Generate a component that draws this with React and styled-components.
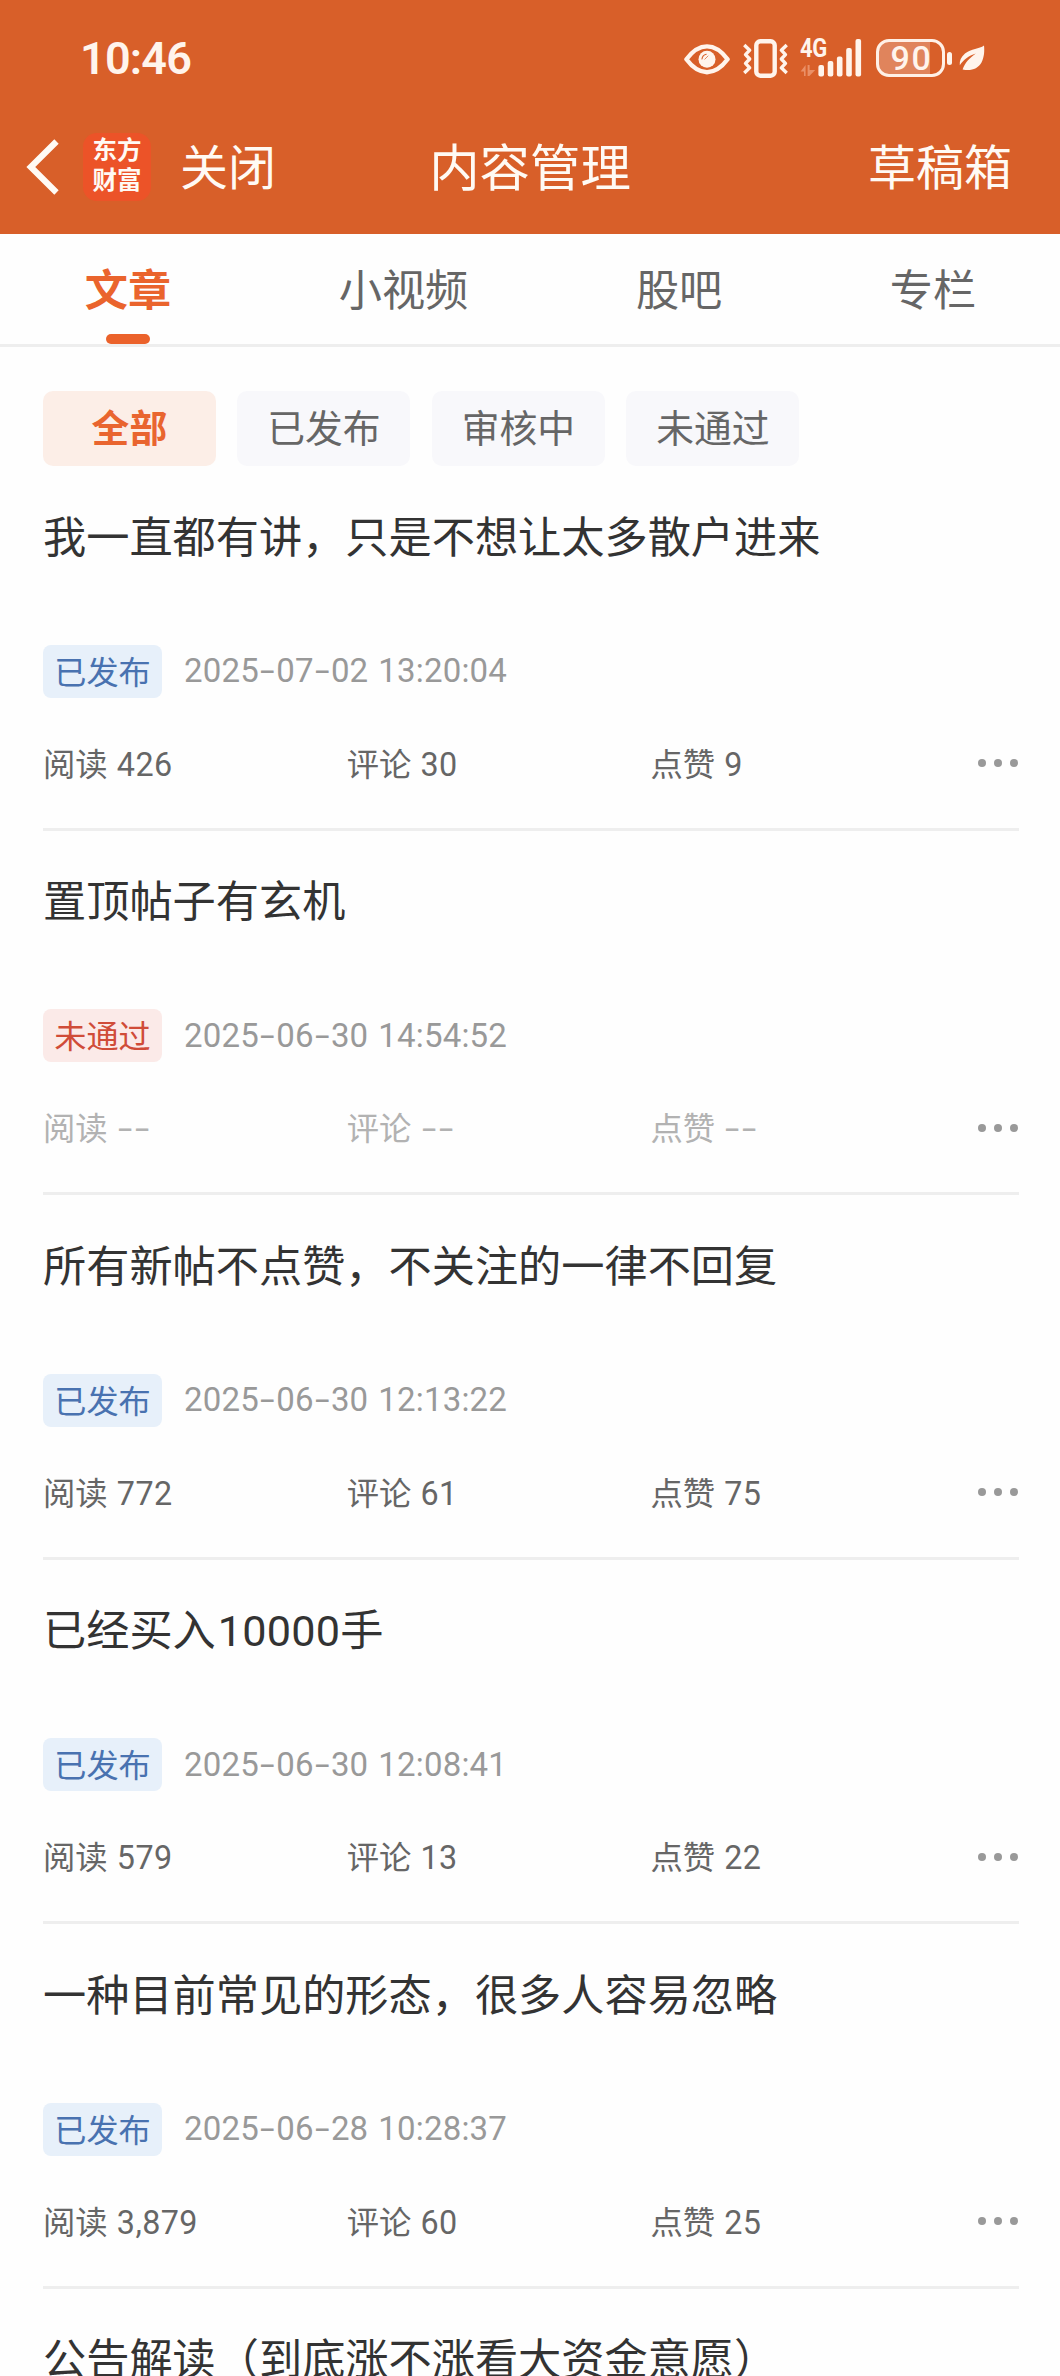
import React from "react";
import styled, { createGlobalStyle } from "styled-components";

const GlobalStyle = createGlobalStyle`
  * { box-sizing: border-box; }
  html, body { margin: 0; padding: 0; background: #fefefe; }
  body {
    font-family: Roboto, "Noto Sans CJK SC", sans-serif;
    -webkit-font-smoothing: antialiased;
  }
`;

const Screen = styled.div`
  width: 1060px;
  height: 2376px;
  overflow: hidden;
  background: #fefefe;
`;

const Header = styled.header`
  height: 234px;
  background: #d85f29;
  color: #fffaf4;
`;

const StatusBar = styled.div`
  display: flex;
  align-items: center;
  justify-content: space-between;
  height: 116px;
  padding: 0 75px 0 80px;
  color: #fff4ec;
`;

const Clock = styled.span`
  padding-top: 2px;
  font-size: 45px;
  font-weight: 600;
  line-height: 52px;
  letter-spacing: -0.8px;
`;

const StatusIcons = styled.div`
  display: flex;
  align-items: center;
`;

const Glyph = styled.svg`
  display: block;
  flex: none;
  margin-left: ${(p) => p.$gap || 0}px;
`;

const Signal = styled.div`
  position: relative;
  width: 62px;
  height: 40px;
  margin-left: 11px;
`;

const NetworkType = styled.span`
  position: absolute;
  left: 0;
  top: -1px;
  font-size: 25px;
  font-weight: 700;
  line-height: 24px;
  letter-spacing: -0.5px;
  transform: scaleX(0.88);
  transform-origin: left center;
`;

const Battery = styled.div`
  display: flex;
  align-items: center;
  margin-left: 14px;
`;

const BatteryBody = styled.div`
  display: flex;
  align-items: center;
  justify-content: center;
  width: 69px;
  height: 38px;
  padding-left: 2px;
  border: 3.5px solid #fff0e6;
  border-radius: 13px;
  background: linear-gradient(to right, #e0845c 51px, transparent 51px);
  font-size: 34px;
  font-weight: 500;
  line-height: 34px;
  letter-spacing: 1.6px;
`;

const BatteryCap = styled.div`
  width: 5px;
  height: 13px;
  margin-left: 2px;
  border-radius: 2.5px;
  background: #fff4ec;
`;

const NavBar = styled.div`
  display: grid;
  grid-template-columns: 1fr auto 1fr;
  align-items: center;
  height: 101px;
  padding: 0 48px 0 26px;
`;

const NavLeft = styled.div`
  display: flex;
  align-items: center;
`;

const Logo = styled.div`
  display: flex;
  flex-direction: column;
  align-items: center;
  justify-content: center;
  width: 68px;
  height: 68px;
  margin: 0 29px 0 24px;
  padding-bottom: 2px;
  border-radius: 14px;
  background: #ec5328;
  font-size: 24.5px;
  font-weight: 700;
  line-height: 29.5px;
`;

const NavText = styled.span`
  padding-top: 4px;
  font-size: 48px;
  line-height: 64px;
  justify-self: ${(p) => (p.$end ? "end" : "auto")};
`;

const NavTitle = styled.h1`
  margin: 0;
  padding: 4px 0 0 22px;
  font-size: 50.4px;
  font-weight: 400;
  line-height: 64px;
`;

const Tabs = styled.nav`
  display: flex;
  justify-content: space-around;
  height: 113px;
  padding-left: 1px;
  border-bottom: 3px solid #eee;
`;

const Tab = styled.div`
  display: flex;
  flex-direction: column;
  align-items: center;
  justify-content: space-between;
  padding-top: 26px;
  color: ${(p) => (p.$active ? "#ea642d" : "#666")};
  font-size: 43.2px;
  font-weight: ${(p) => (p.$active ? 700 : 400)};
  line-height: 64px;
`;

const TabMark = styled.div`
  width: 44px;
  height: 10px;
  border-radius: 5px;
  background: #eb622b;
`;

const Filters = styled.div`
  display: flex;
  gap: 21.7px;
  padding: 44px 43px 0;
`;

const Chip = styled.div`
  display: flex;
  align-items: center;
  justify-content: center;
  width: 172.8px;
  height: 75px;
  padding-bottom: 6px;
  border-radius: 10px;
  background: ${(p) => (p.$active ? "#fceee7" : "#f8f8fb")};
  color: ${(p) => (p.$active ? "#e9652f" : "#666")};
  font-size: 37.8px;
  font-weight: ${(p) => (p.$active ? 700 : 400)};
`;

const List = styled.main`
  padding: 0 41px 0 43px;
`;

const Post = styled.article`
  height: 364.5px;
  padding-top: 40.5px;
  border-bottom: 3px solid #eee;
`;

const PostTitle = styled.h2`
  margin: 0;
  color: #333;
  font-size: 43.2px;
  font-weight: 400;
  line-height: 64px;
  white-space: nowrap;
`;

const TitleNumber = styled.span`
  margin-left: 2px;
  letter-spacing: 0.2px;
`;

const Meta = styled.div`
  display: flex;
  align-items: center;
  gap: 22px;
  height: 53px;
  margin-top: 74px;
`;

const Badge = styled.span`
  width: 119px;
  height: 53px;
  padding-top: 1px;
  border-radius: 8px;
  background: ${(p) => (p.$rejected ? "#fbeae8" : "#e7f0fa")};
  color: ${(p) => (p.$rejected ? "#d04c38" : "#4972b0")};
  font-size: 32.2px;
  line-height: 54px;
  text-align: center;
`;

const PostTime = styled.time`
  color: #999;
  font-size: 33px;
  line-height: 50px;
  letter-spacing: 0.2px;
  word-spacing: 1.5px;
  white-space: pre;
`;

const Dash = styled.span`
  display: inline-block;
  width: 17.2px;
  text-align: center;
  transform: scaleX(1.6);
`;

const Stats = styled.div`
  display: flex;
  align-items: center;
  height: 44px;
  margin-top: 44px;
  padding-top: 2px;
  color: ${(p) => (p.$dim ? "#b2b2b2" : "#666")};
`;

const Stat = styled.span`
  width: 303.7px;
  font-size: 32.3px;
  line-height: 44px;
  word-spacing: 1.2px;
`;

const Count = styled.span`
  letter-spacing: 0.4px;
`;

const MoreButton = styled.div`
  display: flex;
  gap: 8px;
  margin: 0 1px 3px auto;
`;

const Dot = styled.i`
  width: 8px;
  height: 8px;
  border-radius: 50%;
  background: #999;
`;

const tabs = ["文章", "小视频", "股吧", "专栏"];
const filters = ["全部", "已发布", "审核中", "未通过"];

const posts = [
  { title: "我一直都有讲，只是不想让太多散户进来", time: "2025-07-02 13:20:04", reads: "426", comments: "30", likes: "9" },
  { title: "置顶帖子有玄机", time: "2025-06-30 14:54:52", rejected: true, reads: "--", comments: "--", likes: "--" },
  { title: "所有新帖不点赞，不关注的一律不回复", time: "2025-06-30 12:13:22", reads: "772", comments: "61", likes: "75" },
  { title: "已经买入10000手", time: "2025-06-30 12:08:41", reads: "579", comments: "13", likes: "22" },
  { title: "一种目前常见的形态，很多人容易忽略", time: "2025-06-28 10:28:37", reads: "3,879", comments: "60", likes: "25" },
];

function WideDashes({ text }) {
  return text
    .split(/(-)/)
    .map((part, i) => (part === "-" ? <Dash key={i}>-</Dash> : part));
}

function TitleText({ text }) {
  return text
    .split(/(\d+)/)
    .map((part, i) => (/^\d+$/.test(part) ? <TitleNumber key={i}>{part}</TitleNumber> : part));
}

function EyeIcon() {
  return (
    <Glyph width="46" height="40" viewBox="0 0 46 40">
      <path d="M2.400 21.300C9 12.400 15.800 8.400 23 8.400s14 4 20.600 12.900C37 30.200 30.200 34.200 23 34.200S9 30.200 2.400 21.300Z" fill="none" stroke="#fff4ec" strokeWidth="4.400" strokeLinejoin="round" />
      <circle cx="23" cy="21.300" r="8.500" fill="#fff4ec" />
      <path d="M18 21c.3-2.600 1.700-4.200 4.200-4.800" fill="none" stroke="#d85f29" strokeWidth="1.100" strokeLinecap="round" />
      <path d="M20.800 21.200l3.200-3.200" fill="none" stroke="#d85f29" strokeWidth="0.700" strokeLinecap="round" />
    </Glyph>
  );
}

function VibrateIcon() {
  return (
    <Glyph $gap={13} width="46" height="40" viewBox="0 0 46 40">
      <rect x="13.300" y="3.300" width="18.400" height="34.400" rx="4" fill="none" stroke="#fff4ec" strokeWidth="4.400" />
      <path d="M2.500 8.200l4.200 4-4.200 4.400 4.200 4.400-4.200 4.400 4.200 4.400-4.200 4" fill="none" stroke="#fff4ec" strokeWidth="3.400" strokeLinecap="square" strokeLinejoin="round" />
      <path d="M42.500 8.200l-4.200 4 4.200 4.400-4.200 4.400 4.200 4.400-4.200 4.400 4.200 4" fill="none" stroke="#fff4ec" strokeWidth="3.400" strokeLinecap="square" strokeLinejoin="round" />
    </Glyph>
  );
}

function SignalIcon() {
  return (
    <Signal>
      <NetworkType>4G</NetworkType>
      <Glyph width="62" height="40" viewBox="0 0 62 40">
        <path d="M.6 33.500L5.600 27v11H4v-4.500ZM7.600 27h2v5h5.600L9.400 38h-1.800Z" fill="#ea9067" />
        <g fill="#fff4ec">
          <rect x="18.400" y="27" width="5.600" height="11.500" rx="2" />
          <rect x="27.700" y="23" width="5.600" height="15.500" rx="2" />
          <rect x="36.900" y="18.500" width="5.600" height="20" rx="2" />
          <rect x="46.200" y="10" width="5.600" height="28.500" rx="2" />
          <rect x="55.500" y="1" width="5.600" height="37.500" rx="2" />
        </g>
      </Glyph>
    </Signal>
  );
}

function LeafIcon() {
  return (
    <Glyph $gap={7} width="26" height="28" viewBox="0 0 26 28">
      <path d="M25 1.500C20.500 5.200 12 4.600 6 9.600 2 13 .3 17 .8 21.300 4.500 15.600 9.500 11.800 16.800 9.400 10.600 13.800 6 18.500 3.600 25.400 11.500 27.300 19 25 22.500 18.500 25.300 13.200 25.600 6.500 25 1.500Z" fill="#fff4ec" />
    </Glyph>
  );
}

function BackIcon() {
  return (
    <Glyph width="33" height="58" viewBox="0 0 33 58">
      <path d="M30.500 3.500L4.800 29l25.700 25.500" fill="none" stroke="#fffaf4" strokeWidth="6.200" />
    </Glyph>
  );
}

function StatItem({ label, value }) {
  return (
    <Stat>
      {label} <Count><WideDashes text={value} /></Count>
    </Stat>
  );
}

export default function App() {
  return (
    <Screen lang="zh-CN">
      <GlobalStyle />
      <Header>
        <StatusBar>
          <Clock>10:46</Clock>
          <StatusIcons>
            <EyeIcon />
            <VibrateIcon />
            <SignalIcon />
            <Battery>
              <BatteryBody>90</BatteryBody>
              <BatteryCap />
            </Battery>
            <LeafIcon />
          </StatusIcons>
        </StatusBar>
        <NavBar>
          <NavLeft>
            <BackIcon />
            <Logo>
              <span>东方</span>
              <span>财富</span>
            </Logo>
            <NavText>关闭</NavText>
          </NavLeft>
          <NavTitle>内容管理</NavTitle>
          <NavText $end>草稿箱</NavText>
        </NavBar>
      </Header>
      <Tabs>
        {tabs.map((name, i) => (
          <Tab key={name} $active={i === 0}>
            {name}
            {i === 0 && <TabMark />}
          </Tab>
        ))}
      </Tabs>
      <Filters>
        {filters.map((name, i) => (
          <Chip key={name} $active={i === 0}>{name}</Chip>
        ))}
      </Filters>
      <List>
        {posts.map((post) => (
          <Post key={post.title}>
            <PostTitle><TitleText text={post.title} /></PostTitle>
            <Meta>
              <Badge $rejected={post.rejected}>{post.rejected ? "未通过" : "已发布"}</Badge>
              <PostTime><WideDashes text={post.time} /></PostTime>
            </Meta>
            <Stats $dim={post.rejected}>
              <StatItem label="阅读" value={post.reads} />
              <StatItem label="评论" value={post.comments} />
              <StatItem label="点赞" value={post.likes} />
              <MoreButton>
                <Dot />
                <Dot />
                <Dot />
              </MoreButton>
            </Stats>
          </Post>
        ))}
        <Post>
          <PostTitle>公告解读（到底涨不涨看大资金意愿）</PostTitle>
        </Post>
      </List>
    </Screen>
  );
}
